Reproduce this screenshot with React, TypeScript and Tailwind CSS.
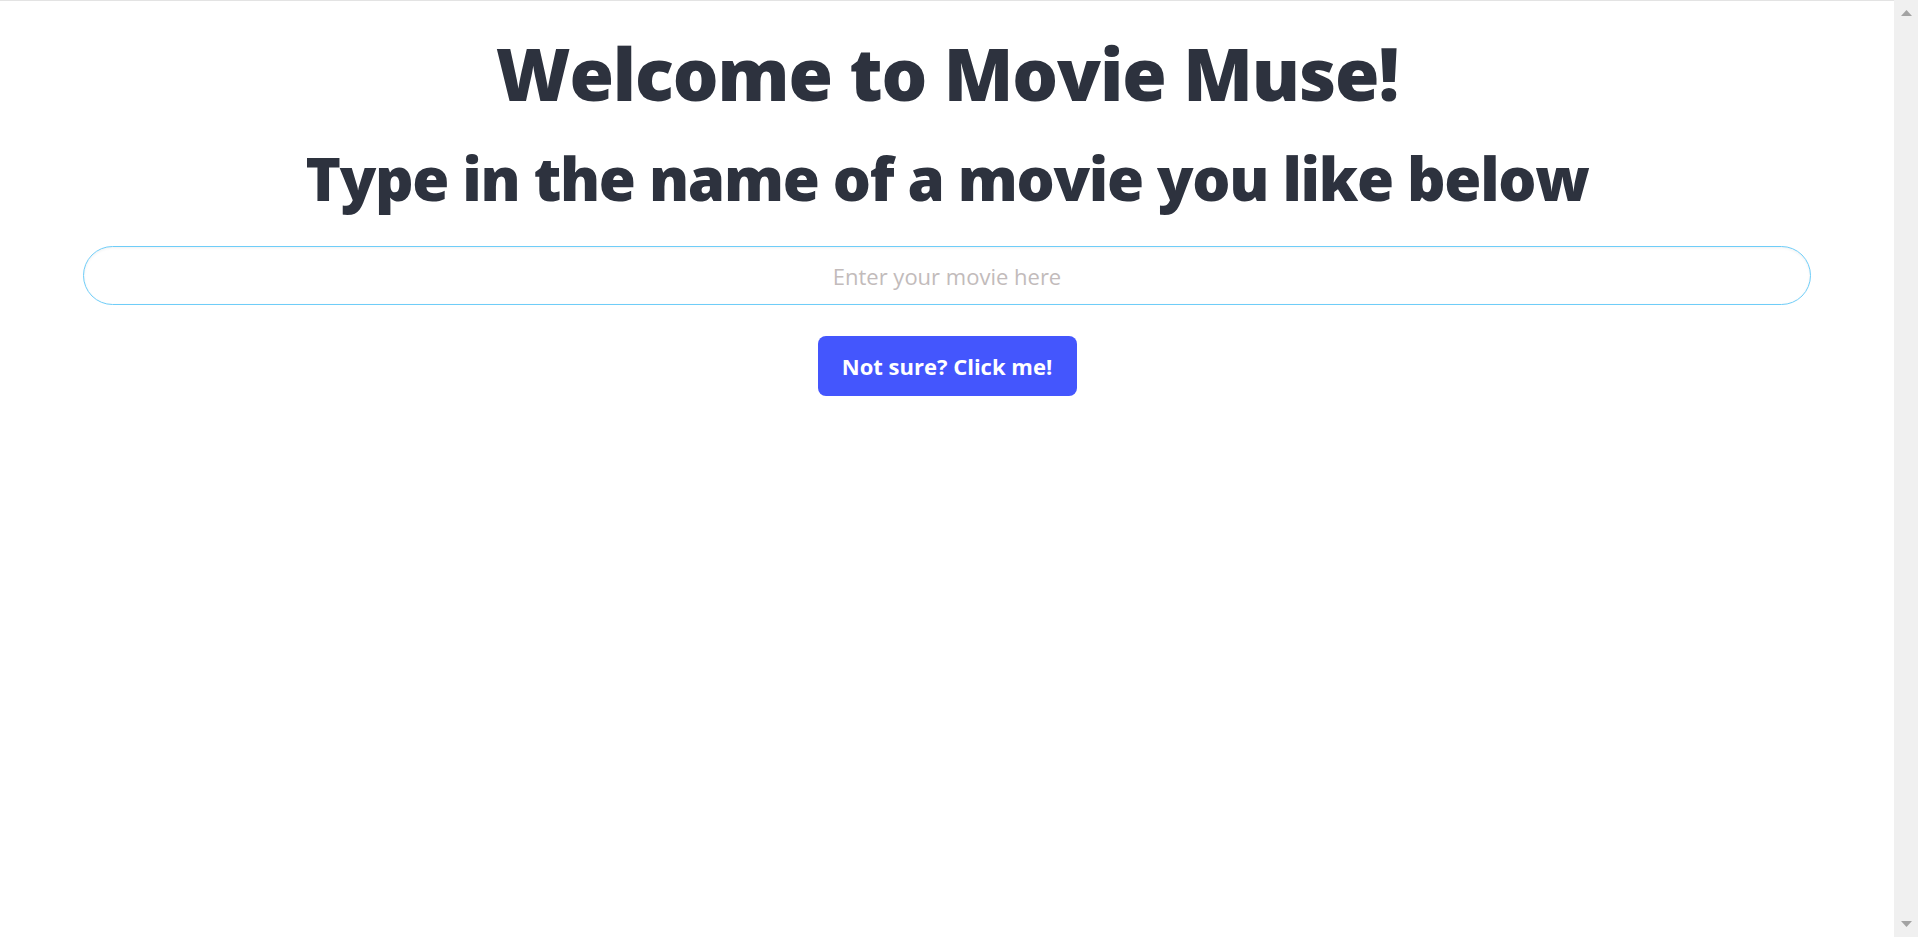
import React from "react";

export default function App() {
  return (
    <div className="flex h-[937px] w-full overflow-hidden bg-white font-['Open_Sans','Noto_Sans',sans-serif]">
      <main className="flex flex-1 flex-col items-center border-t border-[#e3e3e3]">
        <h1 className="mt-[32px] h-[80px] text-[72px] font-extrabold leading-[80px] tracking-[-1.1px] text-[#2d323e]">
          Welcome to Movie Muse!
        </h1>
        <h2 className="mt-[31px] h-[68px] text-[60px] font-extrabold leading-[68px] tracking-[-1.3px] text-[#2d323e]">
          Type in the name of a movie you like below
        </h2>
        <div className="mt-[34px] w-full px-[83px]">
          <input
            type="text"
            placeholder="Enter your movie here"
            className="h-[59px] w-full rounded-full border border-[#6fcdf8] bg-white text-center text-[22px] text-[#333] shadow-[inset_0_1px_3px_rgba(0,0,0,0.06)] outline-none placeholder:text-[#c2bbbb]"
          />
        </div>
        <button className="mt-[31px] h-[60px] w-[259px] rounded-lg bg-[#4456fd] text-[22px] font-bold text-white">
          Not sure? Click me!
        </button>
      </main>
      <div className="flex w-[24px] flex-col items-center justify-between bg-[#f0f0f0] py-[10px]">
        <svg width="11" height="6" viewBox="0 0 11 6">
          <polygon points="5.5,0 11,6 0,6" fill="#a3a3a3" />
        </svg>
        <svg width="11" height="6" viewBox="0 0 11 6">
          <polygon points="0,0 11,0 5.5,6" fill="#a3a3a3" />
        </svg>
      </div>
    </div>
  );
}
